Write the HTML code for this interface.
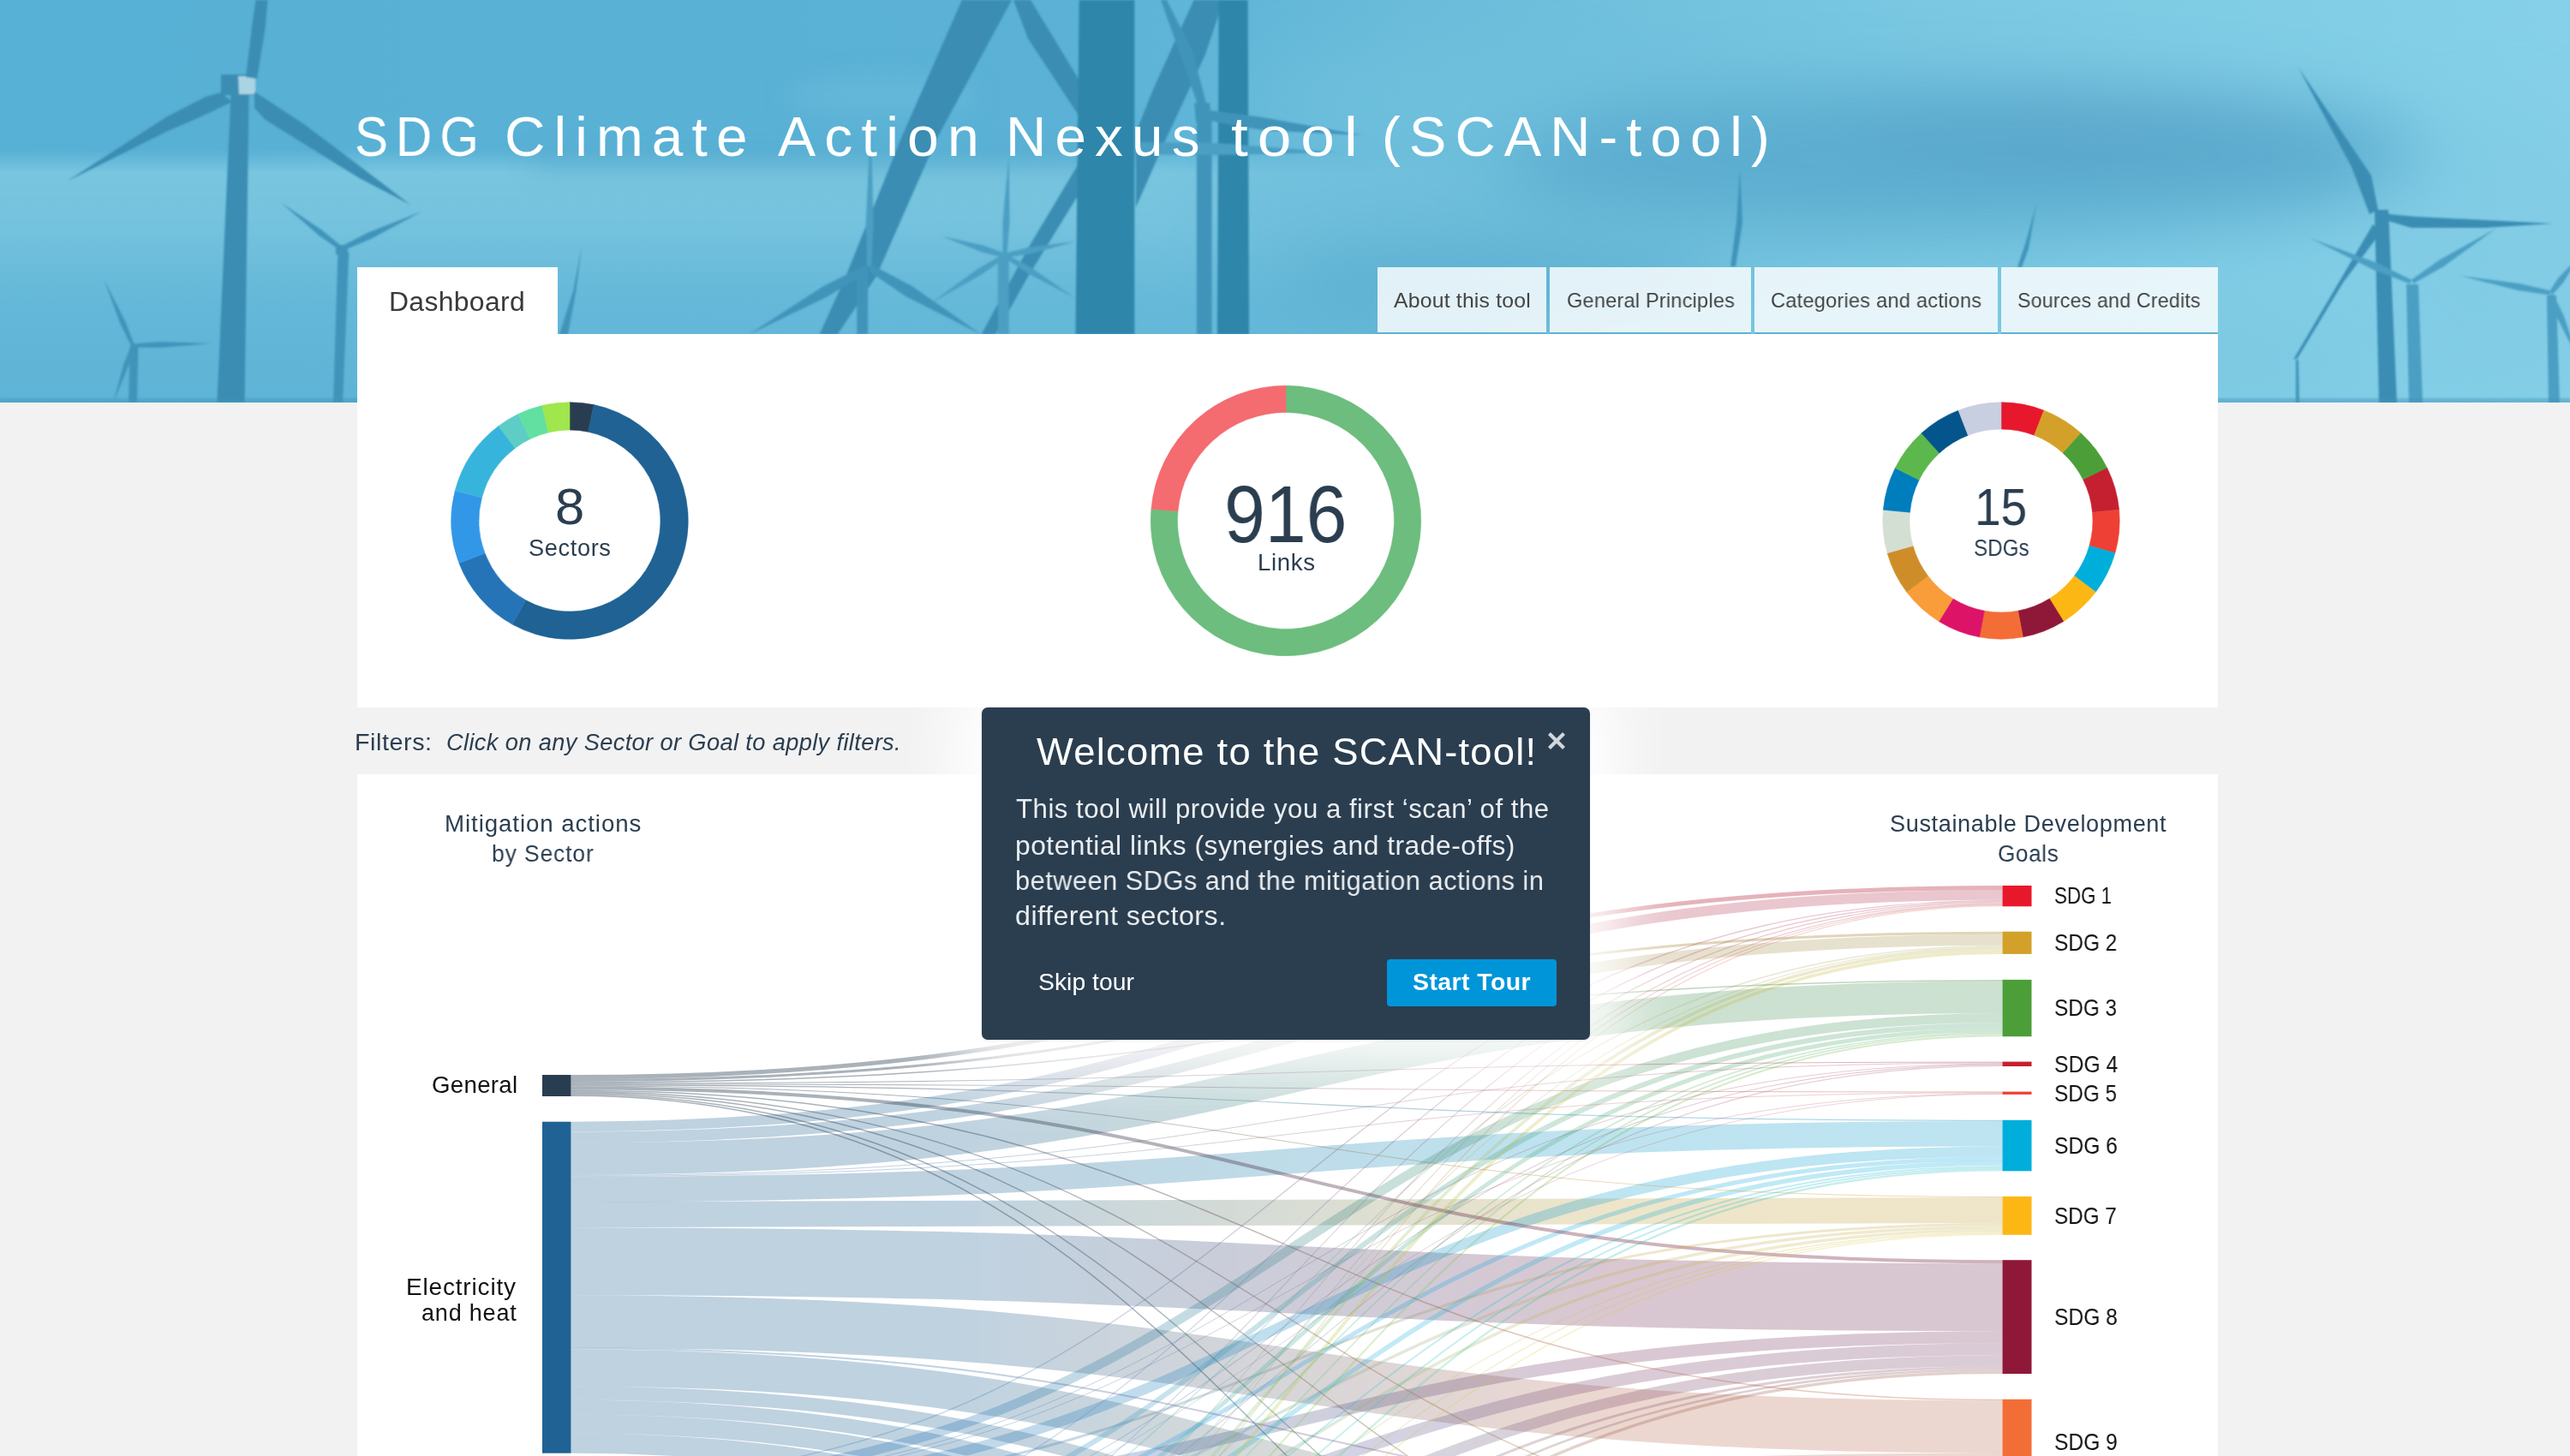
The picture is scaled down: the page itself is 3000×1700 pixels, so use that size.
<!DOCTYPE html>
<html lang="en"><head><meta charset="utf-8"><title>SDG Climate Action Nexus tool (SCAN-tool)</title>
<style>
html,body{margin:0;padding:0}
body{width:3000px;height:1700px;overflow:hidden;background:#f2f2f2;font-family:"Liberation Sans", sans-serif;position:relative}
.t{position:absolute;white-space:nowrap;margin:0;will-change:transform}
.hdr{position:absolute;left:0;top:0}
.box{position:absolute}
.tab{position:absolute;top:312px;height:76px;background:rgba(255,255,255,0.82);border-bottom:2px solid #5fb0d0}
svg{display:block}
</style></head><body><svg class="hdr" width="3000" height="470" viewBox="0 0 3000 470"><defs>
<linearGradient id="sky" x1="0" y1="0" x2="1" y2="0">
<stop offset="0" stop-color="#57b0d5"/><stop offset="0.42" stop-color="#5bb2d6"/><stop offset="0.55" stop-color="#6abcda"/><stop offset="0.75" stop-color="#7ac8e2"/><stop offset="1" stop-color="#86d1e9"/>
</linearGradient>
<linearGradient id="band" x1="0" y1="0" x2="0" y2="1">
<stop offset="0" stop-color="#78c5df" stop-opacity="0"/><stop offset="0.37" stop-color="#78c5df" stop-opacity="0"/>
<stop offset="0.43" stop-color="#79c5df" stop-opacity="1"/><stop offset="0.56" stop-color="#76c3de" stop-opacity="0.95"/>
<stop offset="0.75" stop-color="#68bad9" stop-opacity="0.8"/><stop offset="1" stop-color="#60b5d6" stop-opacity="0.8"/>
</linearGradient>
<linearGradient id="fadeR" x1="0" y1="0" x2="1" y2="0">
<stop offset="0" stop-color="#fff"/><stop offset="0.45" stop-color="#fff"/><stop offset="0.62" stop-color="#000"/><stop offset="1" stop-color="#000"/>
</linearGradient>
<mask id="mL"><rect width="3000" height="470" fill="url(#fadeR)"/></mask>
<filter id="b40" x="-20%" y="-80%" width="140%" height="260%"><feGaussianBlur stdDeviation="38"/></filter>
<filter id="b12" x="-20%" y="-80%" width="140%" height="260%"><feGaussianBlur stdDeviation="14"/></filter>
<filter id="b1"><feGaussianBlur stdDeviation="0.8"/></filter>
</defs><rect width="3000" height="470" fill="url(#sky)"/><rect width="3000" height="470" fill="url(#band)" mask="url(#mL)"/><g filter="url(#b12)"><rect x="620" y="184" width="700" height="12" fill="#52a6cb" opacity="0.8"/><ellipse cx="1030" cy="112" rx="110" ry="22" fill="#6cbddb" opacity="0.6"/></g><g filter="url(#b40)"><ellipse cx="2300" cy="185" rx="560" ry="85" fill="#58a9cd" opacity="0.85"/><ellipse cx="2450" cy="150" rx="280" ry="45" fill="#559fc5" opacity="0.35"/><ellipse cx="1750" cy="330" rx="260" ry="45" fill="#59abce" opacity="0.7"/><ellipse cx="2250" cy="420" rx="520" ry="55" fill="#7cc8e1" opacity="0.8"/><ellipse cx="2920" cy="300" rx="170" ry="170" fill="#80cbe4" opacity="0.7"/><ellipse cx="1650" cy="120" rx="200" ry="70" fill="#72c2de" opacity="0.6"/></g><g filter="url(#b1)"><polygon points="269.5,110 290.5,110 285.6,470 253.4,470" fill="#3a8db3"/><polygon points="258,87 299,87 299,111 258,111" fill="#3a8db3"/><polygon points="278,89 298.5,89 298.5,110 279,110" fill="#a9d4e3"/><polygon points="287,90 294,32 298.5,0 312.4,0 309.8,32 300,92" fill="#3a8db3"/><polygon points="258,108 240,113 193.6,137 78.4,211.4 193.6,154 235,136 271,119" fill="#3a8db3"/><polygon points="297,107 355,145 419.6,193.7 478.6,238.8 419.6,208 355,168 310,140 297,126" fill="#3a8db3"/><polygon points="394.4,295 407.3,295 400,470 389,470" fill="#4194ba"/><polygon points="400.1,288.5 376.1,268.9 328.2,236.6 371.8,274.4 397.1,292.5" fill="#4194ba"/><polygon points="399.7,292.8 433.0,278.9 492.2,247.0 429.7,271.6 397.5,288.2" fill="#4194ba"/><polygon points="392,286 406,286 406,297 392,297" fill="#4194ba"/><polygon points="151.7,404 161.4,404 160,470 150,470" fill="#4194ba"/><polygon points="156.8,402.6 146.4,375.6 122.0,327.6 140.5,378.2 153.2,404.2" fill="#4194ba"/><polygon points="155.1,405.4 187.3,406.1 247.0,401.0 187.1,399.1 154.9,401.4" fill="#4194ba"/><polygon points="153.1,402.8 144.2,425.7 132.3,470.0 149.9,427.7 156.9,404.0" fill="#4194ba"/><polygon points="679,287 669.4,339 653,390.5 663,390.5 672.5,339" fill="#4194ba"/><polygon points="1122.9,0 1181,0 1093.8,161.4 1022.8,322.8 977.6,390.6 956.6,390.6 987.3,322.8 1051.9,161.4" fill="#3a8db3"/><polygon points="1183,0 1203,0 1259.7,93.6 1259.7,135.6 1200,45" fill="#3a8db3"/><polygon points="1259.7,190 1259.7,226 1200,323 1162,390.6 1145.5,390.6 1200,290" fill="#3a8db3"/><polygon points="1393.7,0 1424,0 1424,13 1406.6,64.6 1361.4,161.4 1325.9,242 1325.9,155 1345.2,106.5 1374.3,42" fill="#3a8db3"/><polygon points="1355,0 1362,0 1392,60 1409,124 1400,128 1380,70" fill="#4194ba"/><polygon points="1259.7,0 1324.3,0 1324.3,390.6 1255.5,390.6" fill="#2e86ab"/><polygon points="1422.7,0 1456.6,0 1458,390.6 1421,390.6" fill="#2e86ab"/><polygon points="1396.9,139 1414.6,139 1414.6,390.6 1396.9,390.6" fill="#4194ba"/><polygon points="1394,120 1412,120 1414,140 1396,142" fill="#4194ba"/><polygon points="1413,129 1474,137 1590.5,158 1474,152 1413,141" fill="#4194ba"/><polygon points="1329,166 1420,167 1561,178 1420,181 1329,180" fill="#4c9fc3"/><polygon points="1164.8,300 1177.7,300 1177.7,390.6 1164.8,390.6" fill="#4c9fc3"/><polygon points="1175.4,298.6 1178.6,258.0 1177.7,182.4 1170.6,257.7 1170.4,298.4" fill="#4c9fc3"/><polygon points="1173.6,296.1 1148.7,286.8 1100.3,276.0 1146.3,294.4 1172.2,300.9" fill="#4c9fc3"/><polygon points="1173.4,301.0 1202.4,296.6 1255.0,282.0 1200.8,288.8 1172.4,296.0" fill="#4c9fc3"/><polygon points="1171.5,296.4 1140.8,314.3 1087.4,353.4 1145.1,321.1 1174.3,300.6" fill="#4c9fc3"/><polygon points="1171.6,300.6 1199.6,319.3 1255.0,348.0 1203.7,312.4 1174.2,296.4" fill="#4c9fc3"/><polygon points="1000.2,318 1013.1,318 1013.1,390.6 1000.2,390.6" fill="#4194ba"/><polygon points="1017.2,311.5 1019.7,260.7 1016.4,142.0 1010.7,260.6 1012.2,311.5" fill="#4c9fc3"/><polygon points="1010.0,309.5 960.6,334.5 874.3,390.6 967.0,345.8 1014.0,316.5" fill="#4194ba"/><polygon points="1013.9,316.4 1057.7,346.2 1145.5,390.6 1064.9,334.2 1018.1,309.6" fill="#4194ba"/><polygon points="2031,198 2034,260 2026,311 2020,311 2027,260" fill="#4194ba"/><polygon points="2377,239 2368,290 2360,312 2355,312 2364,285" fill="#4194ba"/><polygon points="2772,245 2788,245 2798,471 2777,471" fill="#3a8db3"/><polygon points="2683,79 2768,205 2776,245 2766,250 2745,195" fill="#3a8db3"/><polygon points="2788,250 2820,253 2980,261 2900,266 2815,266 2788,258" fill="#3a8db3"/><polygon points="2770,262 2677,420 2682,418 2735,330 2780,270" fill="#3a8db3"/><polygon points="2809,332 2823,332 2828,471 2812,471" fill="#4c9fc3"/><polygon points="2817.3,331.1 2852.7,310.9 2914.0,266.5 2847.9,303.3 2814.7,326.9" fill="#4c9fc3"/><polygon points="2815.0,326.7 2774.7,307.0 2696.5,278.0 2771.1,315.3 2813.0,331.3" fill="#4c9fc3"/><polygon points="2973,345 2984,345 2988,471 2975,471" fill="#4c9fc3"/><polygon points="2977.5,339.5 2940.9,331.1 2871.6,322.0 2939.4,338.9 2976.5,344.5" fill="#4c9fc3"/><polygon points="2980.0,343.5 2992.4,329.7 3010.0,300.0 2986.0,324.9 2976.0,340.5" fill="#4c9fc3"/><polygon points="2975.7,345.0 2985.5,372.2 3010.0,420.0 2992.9,369.0 2980.3,343.0" fill="#4c9fc3"/><polygon points="2680,420 2683,420 2684,471 2680,471" fill="#4194ba"/><rect x="0" y="465" width="3000" height="6" fill="#3f95bb" opacity="0.45"/></g></svg><div class="t" style="left:414.0px;top:127.0px;font-size:65px;line-height:65px;color:#ffffff;letter-spacing:10px;font-weight:normal;font-style:normal;transform:scaleX(0.9007);transform-origin:0 0;">SDG</div><div class="t" style="left:589.1px;top:127.0px;font-size:65px;line-height:65px;color:#ffffff;letter-spacing:10px;font-weight:normal;font-style:normal;transform:scaleX(1.0111);transform-origin:0 0;">Climate</div><div class="t" style="left:907.6px;top:127.0px;font-size:65px;line-height:65px;color:#ffffff;letter-spacing:10px;font-weight:normal;font-style:normal;transform:scaleX(1.0181);transform-origin:0 0;">Action</div><div class="t" style="left:1173.7px;top:127.0px;font-size:65px;line-height:65px;color:#ffffff;letter-spacing:10px;font-weight:normal;font-style:normal;transform:scaleX(1.0099);transform-origin:0 0;">Nexus</div><div class="t" style="left:1436.9px;top:127.0px;font-size:65px;line-height:65px;color:#ffffff;letter-spacing:10px;font-weight:normal;font-style:normal;transform:scaleX(1.0965);transform-origin:0 0;">tool</div><div class="t" style="left:1612.7px;top:127.0px;font-size:65px;line-height:65px;color:#ffffff;letter-spacing:10px;font-weight:normal;font-style:normal;transform:scaleX(1.0052);transform-origin:0 0;">(SCAN-tool)</div><div class="box" style="left:417px;top:312px;width:234px;height:90px;background:#fff"></div><div class="t" style="left:453.8px;top:337.4px;font-size:31px;line-height:31px;color:#3a3a3a;letter-spacing:0.3px;font-weight:normal;font-style:normal;transform:scaleX(1.0297);transform-origin:0 0;">Dashboard</div><div class="tab" style="left:1607.5px;width:197.5px"></div><div class="t" style="left:1627.2px;top:339.3px;font-size:24px;line-height:24px;color:#444444;letter-spacing:0.2px;font-weight:normal;font-style:normal;transform:scaleX(1.0313);transform-origin:0 0;">About this tool</div><div class="tab" style="left:1809px;width:235px"></div><div class="t" style="left:1828.6px;top:339.3px;font-size:24px;line-height:24px;color:#444444;letter-spacing:0.2px;font-weight:normal;font-style:normal;transform:scaleX(0.9818);transform-origin:0 0;">General Principles</div><div class="tab" style="left:2047.5px;width:284.5px"></div><div class="t" style="left:2066.7px;top:339.3px;font-size:24px;line-height:24px;color:#444444;letter-spacing:0.2px;font-weight:normal;font-style:normal;transform:scaleX(0.9851);transform-origin:0 0;">Categories and actions</div><div class="tab" style="left:2336px;width:253px"></div><div class="t" style="left:2355.2px;top:339.3px;font-size:24px;line-height:24px;color:#444444;letter-spacing:0.2px;font-weight:normal;font-style:normal;transform:scaleX(0.9660);transform-origin:0 0;">Sources and Credits</div><div class="box" style="left:417px;top:390px;width:2172px;height:436px;background:#fff"></div><div class="box" style="left:417px;top:904px;width:2172px;height:800px;background:#fff"></div><svg class="box" style="left:0;top:390px;z-index:5" width="3000" height="440" viewBox="0 390 3000 440"><path d="M665.00,469.70A138.3,138.3 0 0 1 693.28,472.62L686.68,504.24A106,106 0 0 0 665.00,502.00Z" fill="#293d51" stroke="#293d51" stroke-width="0.6"/><path d="M693.28,472.62A138.3,138.3 0 1 1 598.16,729.08L613.77,700.80A106,106 0 1 0 686.68,504.24Z" fill="#1f6293" stroke="#1f6293" stroke-width="0.6"/><path d="M598.16,729.08A138.3,138.3 0 0 1 535.89,657.56L566.04,645.99A106,106 0 0 0 613.77,700.80Z" fill="#2574b7" stroke="#2574b7" stroke-width="0.6"/><path d="M535.89,657.56A138.3,138.3 0 0 1 531.23,572.91L562.47,581.10A106,106 0 0 0 566.04,645.99Z" fill="#3397e8" stroke="#3397e8" stroke-width="0.6"/><path d="M531.23,572.91A138.3,138.3 0 0 1 581.96,497.40L601.36,523.23A106,106 0 0 0 562.47,581.10Z" fill="#37b4db" stroke="#37b4db" stroke-width="0.6"/><path d="M581.96,497.40A138.3,138.3 0 0 1 604.81,483.49L618.87,512.57A106,106 0 0 0 601.36,523.23Z" fill="#5dcdc5" stroke="#5dcdc5" stroke-width="0.6"/><path d="M604.81,483.49A138.3,138.3 0 0 1 632.71,473.52L640.25,504.93A106,106 0 0 0 618.87,512.57Z" fill="#62e0a1" stroke="#62e0a1" stroke-width="0.6"/><path d="M632.71,473.52A138.3,138.3 0 0 1 665.00,469.70L665.00,502.00A106,106 0 0 0 640.25,504.93Z" fill="#a0e64d" stroke="#a0e64d" stroke-width="0.6"/><path d="M1501.00,450.30A157.7,157.7 0 1 1 1343.90,594.26L1374.98,596.97A126.5,126.5 0 1 0 1501.00,481.50Z" fill="#6cbd7e" stroke="#6cbd7e" stroke-width="0.6"/><path d="M1343.90,594.26A157.7,157.7 0 0 1 1501.00,450.30L1501.00,481.50A126.5,126.5 0 0 0 1374.98,596.97Z" fill="#f46b70" stroke="#f46b70" stroke-width="0.6"/><path d="M2336.00,469.80A138.2,138.2 0 0 1 2385.92,479.13L2374.65,508.23A107,107 0 0 0 2336.00,501.00Z" fill="#e8182c" stroke="#e8182c" stroke-width="0.6"/><path d="M2385.92,479.13A138.2,138.2 0 0 1 2429.10,505.87L2408.09,528.93A107,107 0 0 0 2374.65,508.23Z" fill="#d3a12a" stroke="#d3a12a" stroke-width="0.6"/><path d="M2429.10,505.87A138.2,138.2 0 0 1 2459.71,546.40L2431.78,560.31A107,107 0 0 0 2408.09,528.93Z" fill="#4c9f38" stroke="#4c9f38" stroke-width="0.6"/><path d="M2459.71,546.40A138.2,138.2 0 0 1 2473.61,595.25L2442.54,598.13A107,107 0 0 0 2431.78,560.31Z" fill="#c52030" stroke="#c52030" stroke-width="0.6"/><path d="M2473.61,595.25A138.2,138.2 0 0 1 2468.92,645.82L2438.92,637.28A107,107 0 0 0 2442.54,598.13Z" fill="#ee4034" stroke="#ee4034" stroke-width="0.6"/><path d="M2468.92,645.82A138.2,138.2 0 0 1 2446.29,691.28L2421.39,672.48A107,107 0 0 0 2438.92,637.28Z" fill="#00aedb" stroke="#00aedb" stroke-width="0.6"/><path d="M2446.29,691.28A138.2,138.2 0 0 1 2408.75,725.50L2392.33,698.97A107,107 0 0 0 2421.39,672.48Z" fill="#fdb715" stroke="#fdb715" stroke-width="0.6"/><path d="M2408.75,725.50A138.2,138.2 0 0 1 2361.39,743.85L2355.66,713.18A107,107 0 0 0 2392.33,698.97Z" fill="#8f1838" stroke="#8f1838" stroke-width="0.6"/><path d="M2361.39,743.85A138.2,138.2 0 0 1 2310.61,743.85L2316.34,713.18A107,107 0 0 0 2355.66,713.18Z" fill="#f36d36" stroke="#f36d36" stroke-width="0.6"/><path d="M2310.61,743.85A138.2,138.2 0 0 1 2263.25,725.50L2279.67,698.97A107,107 0 0 0 2316.34,713.18Z" fill="#dd1368" stroke="#dd1368" stroke-width="0.6"/><path d="M2263.25,725.50A138.2,138.2 0 0 1 2225.71,691.28L2250.61,672.48A107,107 0 0 0 2279.67,698.97Z" fill="#f89d39" stroke="#f89d39" stroke-width="0.6"/><path d="M2225.71,691.28A138.2,138.2 0 0 1 2203.08,645.82L2233.08,637.28A107,107 0 0 0 2250.61,672.48Z" fill="#cf8d2a" stroke="#cf8d2a" stroke-width="0.6"/><path d="M2203.08,645.82A138.2,138.2 0 0 1 2198.39,595.25L2229.46,598.13A107,107 0 0 0 2233.08,637.28Z" fill="#d4dfd4" stroke="#d4dfd4" stroke-width="0.6"/><path d="M2198.39,595.25A138.2,138.2 0 0 1 2212.29,546.40L2240.22,560.31A107,107 0 0 0 2229.46,598.13Z" fill="#007dbd" stroke="#007dbd" stroke-width="0.6"/><path d="M2212.29,546.40A138.2,138.2 0 0 1 2242.90,505.87L2263.91,528.93A107,107 0 0 0 2240.22,560.31Z" fill="#5cb84c" stroke="#5cb84c" stroke-width="0.6"/><path d="M2242.90,505.87A138.2,138.2 0 0 1 2286.08,479.13L2297.35,508.23A107,107 0 0 0 2263.91,528.93Z" fill="#03558b" stroke="#03558b" stroke-width="0.6"/><path d="M2286.08,479.13A138.2,138.2 0 0 1 2336.00,469.80L2336.00,501.00A107,107 0 0 0 2297.35,508.23Z" fill="#c7cfe0" stroke="#c7cfe0" stroke-width="0.6"/></svg><div class="t" style="left:647.9px;top:562.9px;font-size:59px;line-height:59px;color:#2b3e50;letter-spacing:0px;font-weight:normal;font-style:normal;transform:scaleX(1.0450);transform-origin:0 0;">8</div><div class="t" style="left:616.6px;top:626.6px;font-size:27px;line-height:27px;color:#2b3e50;letter-spacing:0.6px;font-weight:normal;font-style:normal;transform:scaleX(1.0081);transform-origin:0 0;">Sectors</div><div class="t" style="left:1429.3px;top:553.8px;font-size:94px;line-height:94px;color:#2b3e50;letter-spacing:0px;font-weight:normal;font-style:normal;transform:scaleX(0.9145);transform-origin:0 0;">916</div><div class="t" style="left:1467.7px;top:644.3px;font-size:27px;line-height:27px;color:#2b3e50;letter-spacing:0.6px;font-weight:normal;font-style:normal;transform:scaleX(1.0233);transform-origin:0 0;">Links</div><div class="t" style="left:2305.3px;top:562.3px;font-size:61px;line-height:61px;color:#2b3e50;letter-spacing:0px;font-weight:normal;font-style:normal;transform:scaleX(0.9000);transform-origin:0 0;">15</div><div class="t" style="left:2304.3px;top:626.8px;font-size:27px;line-height:27px;color:#2b3e50;letter-spacing:0px;font-weight:normal;font-style:normal;transform:scaleX(0.8975);transform-origin:0 0;">SDGs</div><div class="t" style="left:414.1px;top:854.1px;font-size:27px;line-height:27px;color:#2b3e50;letter-spacing:0.5px;font-weight:normal;font-style:normal;transform:scaleX(1.0658);transform-origin:0 0;">Filters:</div><div class="t" style="left:521.1px;top:854.1px;font-size:27px;line-height:27px;color:#2b3e50;letter-spacing:0.35px;font-weight:normal;font-style:italic;transform:scaleX(1.0096);transform-origin:0 0;">Click on any Sector or Goal to apply filters.</div><div class="t" style="left:518.5px;top:948.7px;font-size:27px;line-height:27px;color:#2b3e50;letter-spacing:0.9px;font-weight:normal;font-style:normal;transform:scaleX(1.0243);transform-origin:0 0;">Mitigation actions</div><div class="t" style="left:573.8px;top:984.4px;font-size:27px;line-height:27px;color:#2b3e50;letter-spacing:0.9px;font-weight:normal;font-style:normal;transform:scaleX(0.9794);transform-origin:0 0;">by Sector</div><div class="t" style="left:2206.0px;top:948.9px;font-size:27px;line-height:27px;color:#2b3e50;letter-spacing:0.6px;font-weight:normal;font-style:normal;transform:scaleX(1.0052);transform-origin:0 0;">Sustainable Development</div><div class="t" style="left:2332.3px;top:983.9px;font-size:27px;line-height:27px;color:#2b3e50;letter-spacing:0.6px;font-weight:normal;font-style:normal;transform:scaleX(0.9696);transform-origin:0 0;">Goals</div><svg class="box" style="left:0;top:904px" width="3000" height="796" viewBox="0 904 3000 796"><defs><linearGradient id="g0_0" gradientUnits="userSpaceOnUse" x1="666.5" y1="0" x2="2337.5" y2="0"><stop offset="0.27" stop-color="#293d51" stop-opacity="0.399"/><stop offset="0.73" stop-color="#b42236" stop-opacity="0.345"/></linearGradient><linearGradient id="g0_1" gradientUnits="userSpaceOnUse" x1="666.5" y1="0" x2="2337.5" y2="0"><stop offset="0.27" stop-color="#293d51" stop-opacity="0.399"/><stop offset="0.73" stop-color="#a58635" stop-opacity="0.345"/></linearGradient><linearGradient id="g0_2" gradientUnits="userSpaceOnUse" x1="666.5" y1="0" x2="2337.5" y2="0"><stop offset="0.27" stop-color="#293d51" stop-opacity="0.399"/><stop offset="0.73" stop-color="#43853f" stop-opacity="0.345"/></linearGradient><linearGradient id="g0_3" gradientUnits="userSpaceOnUse" x1="666.5" y1="0" x2="2337.5" y2="0"><stop offset="0.27" stop-color="#293d51" stop-opacity="0.399"/><stop offset="0.73" stop-color="#9b2839" stop-opacity="0.345"/></linearGradient><linearGradient id="g0_4" gradientUnits="userSpaceOnUse" x1="666.5" y1="0" x2="2337.5" y2="0"><stop offset="0.27" stop-color="#293d51" stop-opacity="0.399"/><stop offset="0.73" stop-color="#b93f3c" stop-opacity="0.345"/></linearGradient><linearGradient id="g0_5" gradientUnits="userSpaceOnUse" x1="666.5" y1="0" x2="2337.5" y2="0"><stop offset="0.27" stop-color="#293d51" stop-opacity="0.399"/><stop offset="0.73" stop-color="#0b8fb6" stop-opacity="0.345"/></linearGradient><linearGradient id="g0_6" gradientUnits="userSpaceOnUse" x1="666.5" y1="0" x2="2337.5" y2="0"><stop offset="0.27" stop-color="#293d51" stop-opacity="0.399"/><stop offset="0.73" stop-color="#c49625" stop-opacity="0.345"/></linearGradient><linearGradient id="g0_7" gradientUnits="userSpaceOnUse" x1="666.5" y1="0" x2="2337.5" y2="0"><stop offset="0.27" stop-color="#293d51" stop-opacity="0.399"/><stop offset="0.73" stop-color="#73223f" stop-opacity="0.345"/></linearGradient><linearGradient id="g0_8" gradientUnits="userSpaceOnUse" x1="666.5" y1="0" x2="2337.5" y2="0"><stop offset="0.27" stop-color="#293d51" stop-opacity="0.399"/><stop offset="0.73" stop-color="#bc603d" stop-opacity="0.345"/></linearGradient><linearGradient id="g0_10" gradientUnits="userSpaceOnUse" x1="666.5" y1="0" x2="2337.5" y2="0"><stop offset="0.27" stop-color="#293d51" stop-opacity="0.399"/><stop offset="0.73" stop-color="#c0833f" stop-opacity="0.345"/></linearGradient><linearGradient id="g0_11" gradientUnits="userSpaceOnUse" x1="666.5" y1="0" x2="2337.5" y2="0"><stop offset="0.27" stop-color="#293d51" stop-opacity="0.399"/><stop offset="0.73" stop-color="#a27735" stop-opacity="0.345"/></linearGradient><linearGradient id="g0_13" gradientUnits="userSpaceOnUse" x1="666.5" y1="0" x2="2337.5" y2="0"><stop offset="0.27" stop-color="#293d51" stop-opacity="0.399"/><stop offset="0.73" stop-color="#4e974d" stop-opacity="0.345"/></linearGradient><linearGradient id="g0_14" gradientUnits="userSpaceOnUse" x1="666.5" y1="0" x2="2337.5" y2="0"><stop offset="0.27" stop-color="#293d51" stop-opacity="0.399"/><stop offset="0.73" stop-color="#0d4f7b" stop-opacity="0.345"/></linearGradient><linearGradient id="g1_0" gradientUnits="userSpaceOnUse" x1="666.5" y1="0" x2="2337.5" y2="0"><stop offset="0.27" stop-color="#1f6293" stop-opacity="0.285"/><stop offset="0.73" stop-color="#b22c48" stop-opacity="0.265"/></linearGradient><linearGradient id="g1_1" gradientUnits="userSpaceOnUse" x1="666.5" y1="0" x2="2337.5" y2="0"><stop offset="0.27" stop-color="#1f6293" stop-opacity="0.285"/><stop offset="0.73" stop-color="#a29046" stop-opacity="0.265"/></linearGradient><linearGradient id="g1_2" gradientUnits="userSpaceOnUse" x1="666.5" y1="0" x2="2337.5" y2="0"><stop offset="0.27" stop-color="#1f6293" stop-opacity="0.285"/><stop offset="0.73" stop-color="#408f51" stop-opacity="0.265"/></linearGradient><linearGradient id="g1_3" gradientUnits="userSpaceOnUse" x1="666.5" y1="0" x2="2337.5" y2="0"><stop offset="0.27" stop-color="#1f6293" stop-opacity="0.285"/><stop offset="0.73" stop-color="#98324b" stop-opacity="0.265"/></linearGradient><linearGradient id="g1_4" gradientUnits="userSpaceOnUse" x1="666.5" y1="0" x2="2337.5" y2="0"><stop offset="0.27" stop-color="#1f6293" stop-opacity="0.285"/><stop offset="0.73" stop-color="#b6494e" stop-opacity="0.265"/></linearGradient><linearGradient id="g1_5" gradientUnits="userSpaceOnUse" x1="666.5" y1="0" x2="2337.5" y2="0"><stop offset="0.27" stop-color="#1f6293" stop-opacity="0.285"/><stop offset="0.73" stop-color="#0899c8" stop-opacity="0.265"/></linearGradient><linearGradient id="g1_6" gradientUnits="userSpaceOnUse" x1="666.5" y1="0" x2="2337.5" y2="0"><stop offset="0.27" stop-color="#1f6293" stop-opacity="0.285"/><stop offset="0.73" stop-color="#c1a037" stop-opacity="0.265"/></linearGradient><linearGradient id="g1_7" gradientUnits="userSpaceOnUse" x1="666.5" y1="0" x2="2337.5" y2="0"><stop offset="0.27" stop-color="#1f6293" stop-opacity="0.285"/><stop offset="0.73" stop-color="#712c51" stop-opacity="0.265"/></linearGradient><linearGradient id="g1_8" gradientUnits="userSpaceOnUse" x1="666.5" y1="0" x2="2337.5" y2="0"><stop offset="0.27" stop-color="#1f6293" stop-opacity="0.285"/><stop offset="0.73" stop-color="#ba6a4f" stop-opacity="0.265"/></linearGradient><linearGradient id="g1_9" gradientUnits="userSpaceOnUse" x1="666.5" y1="0" x2="2337.5" y2="0"><stop offset="0.27" stop-color="#1f6293" stop-opacity="0.285"/><stop offset="0.73" stop-color="#aa2874" stop-opacity="0.265"/></linearGradient><linearGradient id="g1_10" gradientUnits="userSpaceOnUse" x1="666.5" y1="0" x2="2337.5" y2="0"><stop offset="0.27" stop-color="#1f6293" stop-opacity="0.285"/><stop offset="0.73" stop-color="#bd8d51" stop-opacity="0.265"/></linearGradient><linearGradient id="g1_11" gradientUnits="userSpaceOnUse" x1="666.5" y1="0" x2="2337.5" y2="0"><stop offset="0.27" stop-color="#1f6293" stop-opacity="0.285"/><stop offset="0.73" stop-color="#9f8146" stop-opacity="0.265"/></linearGradient><linearGradient id="g1_12" gradientUnits="userSpaceOnUse" x1="666.5" y1="0" x2="2337.5" y2="0"><stop offset="0.27" stop-color="#1f6293" stop-opacity="0.285"/><stop offset="0.73" stop-color="#0876b2" stop-opacity="0.265"/></linearGradient><linearGradient id="g1_13" gradientUnits="userSpaceOnUse" x1="666.5" y1="0" x2="2337.5" y2="0"><stop offset="0.27" stop-color="#1f6293" stop-opacity="0.285"/><stop offset="0.73" stop-color="#4ca15f" stop-opacity="0.265"/></linearGradient><linearGradient id="g1_14" gradientUnits="userSpaceOnUse" x1="666.5" y1="0" x2="2337.5" y2="0"><stop offset="0.27" stop-color="#1f6293" stop-opacity="0.285"/><stop offset="0.73" stop-color="#0b598d" stop-opacity="0.265"/></linearGradient><linearGradient id="g2_0" gradientUnits="userSpaceOnUse" x1="666.5" y1="0" x2="2337.5" y2="0"><stop offset="0.27" stop-color="#2574b7" stop-opacity="0.285"/><stop offset="0.73" stop-color="#b33152" stop-opacity="0.265"/></linearGradient><linearGradient id="g2_2" gradientUnits="userSpaceOnUse" x1="666.5" y1="0" x2="2337.5" y2="0"><stop offset="0.27" stop-color="#2574b7" stop-opacity="0.285"/><stop offset="0.73" stop-color="#41935a" stop-opacity="0.265"/></linearGradient><linearGradient id="g2_3" gradientUnits="userSpaceOnUse" x1="666.5" y1="0" x2="2337.5" y2="0"><stop offset="0.27" stop-color="#2574b7" stop-opacity="0.285"/><stop offset="0.73" stop-color="#9a3754" stop-opacity="0.265"/></linearGradient><linearGradient id="g2_4" gradientUnits="userSpaceOnUse" x1="666.5" y1="0" x2="2337.5" y2="0"><stop offset="0.27" stop-color="#2574b7" stop-opacity="0.285"/><stop offset="0.73" stop-color="#b84e57" stop-opacity="0.265"/></linearGradient><linearGradient id="g2_5" gradientUnits="userSpaceOnUse" x1="666.5" y1="0" x2="2337.5" y2="0"><stop offset="0.27" stop-color="#2574b7" stop-opacity="0.285"/><stop offset="0.73" stop-color="#0a9ed1" stop-opacity="0.265"/></linearGradient><linearGradient id="g2_6" gradientUnits="userSpaceOnUse" x1="666.5" y1="0" x2="2337.5" y2="0"><stop offset="0.27" stop-color="#2574b7" stop-opacity="0.285"/><stop offset="0.73" stop-color="#c3a541" stop-opacity="0.265"/></linearGradient><linearGradient id="g2_7" gradientUnits="userSpaceOnUse" x1="666.5" y1="0" x2="2337.5" y2="0"><stop offset="0.27" stop-color="#2574b7" stop-opacity="0.285"/><stop offset="0.73" stop-color="#72315a" stop-opacity="0.265"/></linearGradient><linearGradient id="g2_8" gradientUnits="userSpaceOnUse" x1="666.5" y1="0" x2="2337.5" y2="0"><stop offset="0.27" stop-color="#2574b7" stop-opacity="0.285"/><stop offset="0.73" stop-color="#bb6f59" stop-opacity="0.265"/></linearGradient><linearGradient id="g2_9" gradientUnits="userSpaceOnUse" x1="666.5" y1="0" x2="2337.5" y2="0"><stop offset="0.27" stop-color="#2574b7" stop-opacity="0.285"/><stop offset="0.73" stop-color="#ab2d7d" stop-opacity="0.265"/></linearGradient><linearGradient id="g2_10" gradientUnits="userSpaceOnUse" x1="666.5" y1="0" x2="2337.5" y2="0"><stop offset="0.27" stop-color="#2574b7" stop-opacity="0.285"/><stop offset="0.73" stop-color="#bf925b" stop-opacity="0.265"/></linearGradient><linearGradient id="g2_11" gradientUnits="userSpaceOnUse" x1="666.5" y1="0" x2="2337.5" y2="0"><stop offset="0.27" stop-color="#2574b7" stop-opacity="0.285"/><stop offset="0.73" stop-color="#a18650" stop-opacity="0.265"/></linearGradient><linearGradient id="g2_12" gradientUnits="userSpaceOnUse" x1="666.5" y1="0" x2="2337.5" y2="0"><stop offset="0.27" stop-color="#2574b7" stop-opacity="0.285"/><stop offset="0.73" stop-color="#0a7bbb" stop-opacity="0.265"/></linearGradient><linearGradient id="g2_13" gradientUnits="userSpaceOnUse" x1="666.5" y1="0" x2="2337.5" y2="0"><stop offset="0.27" stop-color="#2574b7" stop-opacity="0.285"/><stop offset="0.73" stop-color="#4da669" stop-opacity="0.265"/></linearGradient><linearGradient id="g2_14" gradientUnits="userSpaceOnUse" x1="666.5" y1="0" x2="2337.5" y2="0"><stop offset="0.27" stop-color="#2574b7" stop-opacity="0.285"/><stop offset="0.73" stop-color="#0c5d97" stop-opacity="0.265"/></linearGradient><linearGradient id="g3_0" gradientUnits="userSpaceOnUse" x1="666.5" y1="0" x2="2337.5" y2="0"><stop offset="0.27" stop-color="#3397e8" stop-opacity="0.285"/><stop offset="0.73" stop-color="#b73a5f" stop-opacity="0.265"/></linearGradient><linearGradient id="g3_2" gradientUnits="userSpaceOnUse" x1="666.5" y1="0" x2="2337.5" y2="0"><stop offset="0.27" stop-color="#3397e8" stop-opacity="0.285"/><stop offset="0.73" stop-color="#459d68" stop-opacity="0.265"/></linearGradient><linearGradient id="g3_3" gradientUnits="userSpaceOnUse" x1="666.5" y1="0" x2="2337.5" y2="0"><stop offset="0.27" stop-color="#3397e8" stop-opacity="0.285"/><stop offset="0.73" stop-color="#9e4062" stop-opacity="0.265"/></linearGradient><linearGradient id="g3_4" gradientUnits="userSpaceOnUse" x1="666.5" y1="0" x2="2337.5" y2="0"><stop offset="0.27" stop-color="#3397e8" stop-opacity="0.285"/><stop offset="0.73" stop-color="#bc5765" stop-opacity="0.265"/></linearGradient><linearGradient id="g3_5" gradientUnits="userSpaceOnUse" x1="666.5" y1="0" x2="2337.5" y2="0"><stop offset="0.27" stop-color="#3397e8" stop-opacity="0.285"/><stop offset="0.73" stop-color="#0ea8df" stop-opacity="0.265"/></linearGradient><linearGradient id="g3_6" gradientUnits="userSpaceOnUse" x1="666.5" y1="0" x2="2337.5" y2="0"><stop offset="0.27" stop-color="#3397e8" stop-opacity="0.285"/><stop offset="0.73" stop-color="#c6ae4e" stop-opacity="0.265"/></linearGradient><linearGradient id="g3_7" gradientUnits="userSpaceOnUse" x1="666.5" y1="0" x2="2337.5" y2="0"><stop offset="0.27" stop-color="#3397e8" stop-opacity="0.285"/><stop offset="0.73" stop-color="#763a68" stop-opacity="0.265"/></linearGradient><linearGradient id="g3_8" gradientUnits="userSpaceOnUse" x1="666.5" y1="0" x2="2337.5" y2="0"><stop offset="0.27" stop-color="#3397e8" stop-opacity="0.285"/><stop offset="0.73" stop-color="#bf7866" stop-opacity="0.265"/></linearGradient><linearGradient id="g3_9" gradientUnits="userSpaceOnUse" x1="666.5" y1="0" x2="2337.5" y2="0"><stop offset="0.27" stop-color="#3397e8" stop-opacity="0.285"/><stop offset="0.73" stop-color="#af378b" stop-opacity="0.265"/></linearGradient><linearGradient id="g3_10" gradientUnits="userSpaceOnUse" x1="666.5" y1="0" x2="2337.5" y2="0"><stop offset="0.27" stop-color="#3397e8" stop-opacity="0.285"/><stop offset="0.73" stop-color="#c39b68" stop-opacity="0.265"/></linearGradient><linearGradient id="g3_11" gradientUnits="userSpaceOnUse" x1="666.5" y1="0" x2="2337.5" y2="0"><stop offset="0.27" stop-color="#3397e8" stop-opacity="0.285"/><stop offset="0.73" stop-color="#a5905d" stop-opacity="0.265"/></linearGradient><linearGradient id="g3_14" gradientUnits="userSpaceOnUse" x1="666.5" y1="0" x2="2337.5" y2="0"><stop offset="0.27" stop-color="#3397e8" stop-opacity="0.285"/><stop offset="0.73" stop-color="#1067a4" stop-opacity="0.265"/></linearGradient><linearGradient id="g4_0" gradientUnits="userSpaceOnUse" x1="666.5" y1="0" x2="2337.5" y2="0"><stop offset="0.27" stop-color="#37b4db" stop-opacity="0.285"/><stop offset="0.73" stop-color="#b8425b" stop-opacity="0.265"/></linearGradient><linearGradient id="g4_1" gradientUnits="userSpaceOnUse" x1="666.5" y1="0" x2="2337.5" y2="0"><stop offset="0.27" stop-color="#37b4db" stop-opacity="0.285"/><stop offset="0.73" stop-color="#a9a65a" stop-opacity="0.265"/></linearGradient><linearGradient id="g4_2" gradientUnits="userSpaceOnUse" x1="666.5" y1="0" x2="2337.5" y2="0"><stop offset="0.27" stop-color="#37b4db" stop-opacity="0.285"/><stop offset="0.73" stop-color="#46a564" stop-opacity="0.265"/></linearGradient><linearGradient id="g4_3" gradientUnits="userSpaceOnUse" x1="666.5" y1="0" x2="2337.5" y2="0"><stop offset="0.27" stop-color="#37b4db" stop-opacity="0.285"/><stop offset="0.73" stop-color="#9f485e" stop-opacity="0.265"/></linearGradient><linearGradient id="g4_5" gradientUnits="userSpaceOnUse" x1="666.5" y1="0" x2="2337.5" y2="0"><stop offset="0.27" stop-color="#37b4db" stop-opacity="0.285"/><stop offset="0.73" stop-color="#0fb0db" stop-opacity="0.265"/></linearGradient><linearGradient id="g4_6" gradientUnits="userSpaceOnUse" x1="666.5" y1="0" x2="2337.5" y2="0"><stop offset="0.27" stop-color="#37b4db" stop-opacity="0.285"/><stop offset="0.73" stop-color="#c8b64a" stop-opacity="0.265"/></linearGradient><linearGradient id="g4_7" gradientUnits="userSpaceOnUse" x1="666.5" y1="0" x2="2337.5" y2="0"><stop offset="0.27" stop-color="#37b4db" stop-opacity="0.285"/><stop offset="0.73" stop-color="#774264" stop-opacity="0.265"/></linearGradient><linearGradient id="g4_8" gradientUnits="userSpaceOnUse" x1="666.5" y1="0" x2="2337.5" y2="0"><stop offset="0.27" stop-color="#37b4db" stop-opacity="0.285"/><stop offset="0.73" stop-color="#c08063" stop-opacity="0.265"/></linearGradient><linearGradient id="g4_9" gradientUnits="userSpaceOnUse" x1="666.5" y1="0" x2="2337.5" y2="0"><stop offset="0.27" stop-color="#37b4db" stop-opacity="0.285"/><stop offset="0.73" stop-color="#b03e87" stop-opacity="0.265"/></linearGradient><linearGradient id="g4_10" gradientUnits="userSpaceOnUse" x1="666.5" y1="0" x2="2337.5" y2="0"><stop offset="0.27" stop-color="#37b4db" stop-opacity="0.285"/><stop offset="0.73" stop-color="#c4a365" stop-opacity="0.265"/></linearGradient><linearGradient id="g4_11" gradientUnits="userSpaceOnUse" x1="666.5" y1="0" x2="2337.5" y2="0"><stop offset="0.27" stop-color="#37b4db" stop-opacity="0.285"/><stop offset="0.73" stop-color="#a6985a" stop-opacity="0.265"/></linearGradient><linearGradient id="g4_12" gradientUnits="userSpaceOnUse" x1="666.5" y1="0" x2="2337.5" y2="0"><stop offset="0.27" stop-color="#37b4db" stop-opacity="0.285"/><stop offset="0.73" stop-color="#0f8cc5" stop-opacity="0.265"/></linearGradient><linearGradient id="g4_13" gradientUnits="userSpaceOnUse" x1="666.5" y1="0" x2="2337.5" y2="0"><stop offset="0.27" stop-color="#37b4db" stop-opacity="0.285"/><stop offset="0.73" stop-color="#52b773" stop-opacity="0.265"/></linearGradient><linearGradient id="g4_14" gradientUnits="userSpaceOnUse" x1="666.5" y1="0" x2="2337.5" y2="0"><stop offset="0.27" stop-color="#37b4db" stop-opacity="0.285"/><stop offset="0.73" stop-color="#116fa1" stop-opacity="0.265"/></linearGradient><linearGradient id="g5_0" gradientUnits="userSpaceOnUse" x1="666.5" y1="0" x2="2337.5" y2="0"><stop offset="0.27" stop-color="#5dcdc5" stop-opacity="0.285"/><stop offset="0.73" stop-color="#c24955" stop-opacity="0.265"/></linearGradient><linearGradient id="g5_1" gradientUnits="userSpaceOnUse" x1="666.5" y1="0" x2="2337.5" y2="0"><stop offset="0.27" stop-color="#5dcdc5" stop-opacity="0.285"/><stop offset="0.73" stop-color="#b3ad54" stop-opacity="0.265"/></linearGradient><linearGradient id="g5_2" gradientUnits="userSpaceOnUse" x1="666.5" y1="0" x2="2337.5" y2="0"><stop offset="0.27" stop-color="#5dcdc5" stop-opacity="0.285"/><stop offset="0.73" stop-color="#51ab5e" stop-opacity="0.265"/></linearGradient><linearGradient id="g5_5" gradientUnits="userSpaceOnUse" x1="666.5" y1="0" x2="2337.5" y2="0"><stop offset="0.27" stop-color="#5dcdc5" stop-opacity="0.285"/><stop offset="0.73" stop-color="#19b6d5" stop-opacity="0.265"/></linearGradient><linearGradient id="g5_6" gradientUnits="userSpaceOnUse" x1="666.5" y1="0" x2="2337.5" y2="0"><stop offset="0.27" stop-color="#5dcdc5" stop-opacity="0.285"/><stop offset="0.73" stop-color="#d2bd45" stop-opacity="0.265"/></linearGradient><linearGradient id="g5_7" gradientUnits="userSpaceOnUse" x1="666.5" y1="0" x2="2337.5" y2="0"><stop offset="0.27" stop-color="#5dcdc5" stop-opacity="0.285"/><stop offset="0.73" stop-color="#82495e" stop-opacity="0.265"/></linearGradient><linearGradient id="g5_8" gradientUnits="userSpaceOnUse" x1="666.5" y1="0" x2="2337.5" y2="0"><stop offset="0.27" stop-color="#5dcdc5" stop-opacity="0.285"/><stop offset="0.73" stop-color="#ca875d" stop-opacity="0.265"/></linearGradient><linearGradient id="g5_10" gradientUnits="userSpaceOnUse" x1="666.5" y1="0" x2="2337.5" y2="0"><stop offset="0.27" stop-color="#5dcdc5" stop-opacity="0.285"/><stop offset="0.73" stop-color="#ceaa5f" stop-opacity="0.265"/></linearGradient><linearGradient id="g5_11" gradientUnits="userSpaceOnUse" x1="666.5" y1="0" x2="2337.5" y2="0"><stop offset="0.27" stop-color="#5dcdc5" stop-opacity="0.285"/><stop offset="0.73" stop-color="#b09e54" stop-opacity="0.265"/></linearGradient><linearGradient id="g5_12" gradientUnits="userSpaceOnUse" x1="666.5" y1="0" x2="2337.5" y2="0"><stop offset="0.27" stop-color="#5dcdc5" stop-opacity="0.285"/><stop offset="0.73" stop-color="#1993bf" stop-opacity="0.265"/></linearGradient><linearGradient id="g5_13" gradientUnits="userSpaceOnUse" x1="666.5" y1="0" x2="2337.5" y2="0"><stop offset="0.27" stop-color="#5dcdc5" stop-opacity="0.285"/><stop offset="0.73" stop-color="#5cbe6d" stop-opacity="0.265"/></linearGradient><linearGradient id="g5_14" gradientUnits="userSpaceOnUse" x1="666.5" y1="0" x2="2337.5" y2="0"><stop offset="0.27" stop-color="#5dcdc5" stop-opacity="0.285"/><stop offset="0.73" stop-color="#1b759b" stop-opacity="0.265"/></linearGradient><linearGradient id="g6_0" gradientUnits="userSpaceOnUse" x1="666.5" y1="0" x2="2337.5" y2="0"><stop offset="0.27" stop-color="#62e0a1" stop-opacity="0.285"/><stop offset="0.73" stop-color="#c44e4c" stop-opacity="0.265"/></linearGradient><linearGradient id="g6_1" gradientUnits="userSpaceOnUse" x1="666.5" y1="0" x2="2337.5" y2="0"><stop offset="0.27" stop-color="#62e0a1" stop-opacity="0.285"/><stop offset="0.73" stop-color="#b4b24a" stop-opacity="0.265"/></linearGradient><linearGradient id="g6_2" gradientUnits="userSpaceOnUse" x1="666.5" y1="0" x2="2337.5" y2="0"><stop offset="0.27" stop-color="#62e0a1" stop-opacity="0.285"/><stop offset="0.73" stop-color="#52b154" stop-opacity="0.265"/></linearGradient><linearGradient id="g6_5" gradientUnits="userSpaceOnUse" x1="666.5" y1="0" x2="2337.5" y2="0"><stop offset="0.27" stop-color="#62e0a1" stop-opacity="0.285"/><stop offset="0.73" stop-color="#1abccb" stop-opacity="0.265"/></linearGradient><linearGradient id="g6_6" gradientUnits="userSpaceOnUse" x1="666.5" y1="0" x2="2337.5" y2="0"><stop offset="0.27" stop-color="#62e0a1" stop-opacity="0.285"/><stop offset="0.73" stop-color="#d3c23b" stop-opacity="0.265"/></linearGradient><linearGradient id="g6_7" gradientUnits="userSpaceOnUse" x1="666.5" y1="0" x2="2337.5" y2="0"><stop offset="0.27" stop-color="#62e0a1" stop-opacity="0.285"/><stop offset="0.73" stop-color="#834e54" stop-opacity="0.265"/></linearGradient><linearGradient id="g6_8" gradientUnits="userSpaceOnUse" x1="666.5" y1="0" x2="2337.5" y2="0"><stop offset="0.27" stop-color="#62e0a1" stop-opacity="0.285"/><stop offset="0.73" stop-color="#cc8c53" stop-opacity="0.265"/></linearGradient><linearGradient id="g6_11" gradientUnits="userSpaceOnUse" x1="666.5" y1="0" x2="2337.5" y2="0"><stop offset="0.27" stop-color="#62e0a1" stop-opacity="0.285"/><stop offset="0.73" stop-color="#b2a34a" stop-opacity="0.265"/></linearGradient><linearGradient id="g6_12" gradientUnits="userSpaceOnUse" x1="666.5" y1="0" x2="2337.5" y2="0"><stop offset="0.27" stop-color="#62e0a1" stop-opacity="0.285"/><stop offset="0.73" stop-color="#1a98b5" stop-opacity="0.265"/></linearGradient><linearGradient id="g6_13" gradientUnits="userSpaceOnUse" x1="666.5" y1="0" x2="2337.5" y2="0"><stop offset="0.27" stop-color="#62e0a1" stop-opacity="0.285"/><stop offset="0.73" stop-color="#5ec363" stop-opacity="0.265"/></linearGradient><linearGradient id="g6_14" gradientUnits="userSpaceOnUse" x1="666.5" y1="0" x2="2337.5" y2="0"><stop offset="0.27" stop-color="#62e0a1" stop-opacity="0.285"/><stop offset="0.73" stop-color="#1d7b91" stop-opacity="0.265"/></linearGradient><linearGradient id="g7_0" gradientUnits="userSpaceOnUse" x1="666.5" y1="0" x2="2337.5" y2="0"><stop offset="0.27" stop-color="#a0e64d" stop-opacity="0.285"/><stop offset="0.73" stop-color="#d55035" stop-opacity="0.265"/></linearGradient><linearGradient id="g7_1" gradientUnits="userSpaceOnUse" x1="666.5" y1="0" x2="2337.5" y2="0"><stop offset="0.27" stop-color="#a0e64d" stop-opacity="0.285"/><stop offset="0.73" stop-color="#c5b433" stop-opacity="0.265"/></linearGradient><linearGradient id="g7_2" gradientUnits="userSpaceOnUse" x1="666.5" y1="0" x2="2337.5" y2="0"><stop offset="0.27" stop-color="#a0e64d" stop-opacity="0.285"/><stop offset="0.73" stop-color="#63b23e" stop-opacity="0.265"/></linearGradient><linearGradient id="g7_5" gradientUnits="userSpaceOnUse" x1="666.5" y1="0" x2="2337.5" y2="0"><stop offset="0.27" stop-color="#a0e64d" stop-opacity="0.285"/><stop offset="0.73" stop-color="#2bbdb5" stop-opacity="0.265"/></linearGradient><linearGradient id="g7_6" gradientUnits="userSpaceOnUse" x1="666.5" y1="0" x2="2337.5" y2="0"><stop offset="0.27" stop-color="#a0e64d" stop-opacity="0.285"/><stop offset="0.73" stop-color="#e4c424" stop-opacity="0.265"/></linearGradient><linearGradient id="g7_7" gradientUnits="userSpaceOnUse" x1="666.5" y1="0" x2="2337.5" y2="0"><stop offset="0.27" stop-color="#a0e64d" stop-opacity="0.285"/><stop offset="0.73" stop-color="#94503e" stop-opacity="0.265"/></linearGradient><linearGradient id="g7_8" gradientUnits="userSpaceOnUse" x1="666.5" y1="0" x2="2337.5" y2="0"><stop offset="0.27" stop-color="#a0e64d" stop-opacity="0.285"/><stop offset="0.73" stop-color="#dd8e3c" stop-opacity="0.265"/></linearGradient><linearGradient id="g7_11" gradientUnits="userSpaceOnUse" x1="666.5" y1="0" x2="2337.5" y2="0"><stop offset="0.27" stop-color="#a0e64d" stop-opacity="0.285"/><stop offset="0.73" stop-color="#c2a533" stop-opacity="0.265"/></linearGradient><linearGradient id="g7_12" gradientUnits="userSpaceOnUse" x1="666.5" y1="0" x2="2337.5" y2="0"><stop offset="0.27" stop-color="#a0e64d" stop-opacity="0.285"/><stop offset="0.73" stop-color="#2b999f" stop-opacity="0.265"/></linearGradient><linearGradient id="g7_13" gradientUnits="userSpaceOnUse" x1="666.5" y1="0" x2="2337.5" y2="0"><stop offset="0.27" stop-color="#a0e64d" stop-opacity="0.285"/><stop offset="0.73" stop-color="#6ec44c" stop-opacity="0.265"/></linearGradient><linearGradient id="g7_14" gradientUnits="userSpaceOnUse" x1="666.5" y1="0" x2="2337.5" y2="0"><stop offset="0.27" stop-color="#a0e64d" stop-opacity="0.285"/><stop offset="0.73" stop-color="#2d7c7a" stop-opacity="0.265"/></linearGradient></defs><g fill="none" stroke-opacity="1"><path d="M666.5,1472.8C1502.0,1472.8 1502.0,1514.7 2337.5,1514.7" stroke="url(#g1_7)" stroke-width="79.0"/><path d="M666.5,1543.0C1502.0,1543.0 1502.0,1666.0 2337.5,1666.0" stroke="url(#g1_8)" stroke-width="61.3"/><path d="M666.5,1597.1C1502.0,1597.1 1502.0,1822.6 2337.5,1822.6" stroke="url(#g1_10)" stroke-width="43.0"/><path d="M666.5,1353.2C1502.0,1353.2 1502.0,1164.2 2337.5,1164.2" stroke="url(#g1_2)" stroke-width="37.5"/><path d="M666.5,1418.3C1502.0,1418.3 1502.0,1413.0 2337.5,1413.0" stroke="url(#g1_6)" stroke-width="30.0"/><path d="M666.5,1388.6C1502.0,1388.6 1502.0,1323.7 2337.5,1323.7" stroke="url(#g1_5)" stroke-width="29.4"/><path d="M666.5,1685.1C1502.0,1685.1 1502.0,2132.7 2337.5,2132.7" stroke="url(#g1_14)" stroke-width="23.1"/><path d="M666.5,1662.6C1502.0,1662.6 1502.0,2061.6 2337.5,2061.6" stroke="url(#g1_13)" stroke-width="22.0"/><path d="M666.5,1643.1C1502.0,1643.1 1502.0,2003.1 2337.5,2003.1" stroke="url(#g1_12)" stroke-width="17.0"/><path d="M666.5,1626.6C1502.0,1626.6 1502.0,1924.1 2337.5,1924.1" stroke="url(#g1_11)" stroke-width="16.0"/><path d="M666.5,1762.9C1502.0,1762.9 1502.0,1561.2 2337.5,1561.2" stroke="url(#g2_7)" stroke-width="14.0"/><path d="M666.5,1867.1C1502.0,1867.1 1502.0,1575.2 2337.5,1575.2" stroke="url(#g3_7)" stroke-width="14.0"/><path d="M666.5,1327.9C1502.0,1327.9 1502.0,1097.2 2337.5,1097.2" stroke="url(#g1_1)" stroke-width="13.0"/><path d="M666.5,1963.5C1502.0,1963.5 1502.0,1588.6 2337.5,1588.6" stroke="url(#g4_7)" stroke-width="12.8"/><path d="M666.5,1746.9C1502.0,1746.9 1502.0,1344.4 2337.5,1344.4" stroke="url(#g2_5)" stroke-width="12.0"/><path d="M666.5,1315.5C1502.0,1315.5 1502.0,1044.8 2337.5,1044.8" stroke="url(#g1_0)" stroke-width="11.7"/><path d="M666.5,1733.6C1502.0,1733.6 1502.0,1188.4 2337.5,1188.4" stroke="url(#g2_2)" stroke-width="11.0"/><path d="M666.5,1774.9C1502.0,1774.9 1502.0,1701.6 2337.5,1701.6" stroke="url(#g2_8)" stroke-width="10.0"/><path d="M666.5,1846.7C1502.0,1846.7 1502.0,1196.9 2337.5,1196.9" stroke="url(#g3_2)" stroke-width="6.0"/><path d="M666.5,1950.8C1502.0,1950.8 1502.0,1358.1 2337.5,1358.1" stroke="url(#g4_5)" stroke-width="5.5"/><path d="M666.5,1257.5C1502.0,1257.5 1502.0,1036.5 2337.5,1036.5" stroke="url(#g0_0)" stroke-width="5.0"/><path d="M666.5,1944.4C1502.0,1944.4 1502.0,1202.4 2337.5,1202.4" stroke="url(#g4_2)" stroke-width="5.0"/><path d="M666.5,1854.1C1502.0,1854.1 1502.0,1352.9 2337.5,1352.9" stroke="url(#g3_5)" stroke-width="5.0"/><path d="M666.5,1270.5C1502.0,1270.5 1502.0,1473.2 2337.5,1473.2" stroke="url(#g0_7)" stroke-width="4.0"/><path d="M666.5,2142.9C1502.0,2142.9 1502.0,1112.0 2337.5,1112.0" stroke="url(#g7_1)" stroke-width="3.8"/><path d="M666.5,2091.0C1502.0,2091.0 1502.0,1108.2 2337.5,1108.2" stroke="url(#g6_1)" stroke-width="3.7"/><path d="M666.5,1858.3C1502.0,1858.3 1502.0,1432.8 2337.5,1432.8" stroke="url(#g3_6)" stroke-width="3.5"/><path d="M666.5,1955.3C1502.0,1955.3 1502.0,1436.2 2337.5,1436.2" stroke="url(#g4_6)" stroke-width="3.5"/><path d="M666.5,2152.3C1502.0,2152.3 1502.0,1602.2 2337.5,1602.2" stroke="url(#g7_7)" stroke-width="3.5"/><path d="M666.5,1261.5C1502.0,1261.5 1502.0,1089.2 2337.5,1089.2" stroke="url(#g0_1)" stroke-width="3.0"/><path d="M666.5,1754.4C1502.0,1754.4 1502.0,1429.5 2337.5,1429.5" stroke="url(#g2_6)" stroke-width="3.0"/><path d="M666.5,2044.6C1502.0,2044.6 1502.0,1596.5 2337.5,1596.5" stroke="url(#g5_7)" stroke-width="3.0"/><path d="M666.5,2098.9C1502.0,2098.9 1502.0,1599.2 2337.5,1599.2" stroke="url(#g6_7)" stroke-width="2.5"/><path d="M666.5,2148.1C1502.0,2148.1 1502.0,1366.1 2337.5,1366.1" stroke="url(#g7_5)" stroke-width="2.4"/><path d="M666.5,2145.9C1502.0,2145.9 1502.0,1209.2 2337.5,1209.2" stroke="url(#g7_2)" stroke-width="2.1"/><path d="M666.5,2040.8C1502.0,2040.8 1502.0,1361.9 2337.5,1361.9" stroke="url(#g5_5)" stroke-width="2.0"/><path d="M666.5,2095.5C1502.0,2095.5 1502.0,1363.9 2337.5,1363.9" stroke="url(#g6_5)" stroke-width="2.0"/><path d="M666.5,1574.6C1502.0,1574.6 1502.0,1765.3 2337.5,1765.3" stroke="url(#g1_9)" stroke-width="2.0"/><path d="M666.5,2039.0C1502.0,2039.0 1502.0,1205.7 2337.5,1205.7" stroke="url(#g5_2)" stroke-width="1.6"/><path d="M666.5,2093.7C1502.0,2093.7 1502.0,1207.3 2337.5,1207.3" stroke="url(#g6_2)" stroke-width="1.6"/><path d="M666.5,1941.1C1502.0,1941.1 1502.0,1104.5 2337.5,1104.5" stroke="url(#g4_1)" stroke-width="1.5"/><path d="M666.5,1263.8C1502.0,1263.8 1502.0,1144.7 2337.5,1144.7" stroke="url(#g0_2)" stroke-width="1.5"/><path d="M666.5,1273.2C1502.0,1273.2 1502.0,1634.5 2337.5,1634.5" stroke="url(#g0_8)" stroke-width="1.5"/><path d="M666.5,1274.8C1502.0,1274.8 1502.0,1800.3 2337.5,1800.3" stroke="url(#g0_10)" stroke-width="1.5"/><path d="M666.5,1276.2C1502.0,1276.2 1502.0,1915.3 2337.5,1915.3" stroke="url(#g0_11)" stroke-width="1.5"/><path d="M666.5,1277.8C1502.0,1277.8 1502.0,2049.8 2337.5,2049.8" stroke="url(#g0_13)" stroke-width="1.5"/><path d="M666.5,1279.2C1502.0,1279.2 1502.0,2120.3 2337.5,2120.3" stroke="url(#g0_14)" stroke-width="1.5"/><path d="M666.5,1727.4C1502.0,1727.4 1502.0,1051.4 2337.5,1051.4" stroke="url(#g2_0)" stroke-width="1.4"/><path d="M666.5,1843.0C1502.0,1843.0 1502.0,1052.8 2337.5,1052.8" stroke="url(#g3_0)" stroke-width="1.4"/><path d="M666.5,1939.8C1502.0,1939.8 1502.0,1054.2 2337.5,1054.2" stroke="url(#g4_0)" stroke-width="1.3"/><path d="M666.5,2036.3C1502.0,2036.3 1502.0,1055.5 2337.5,1055.5" stroke="url(#g5_0)" stroke-width="1.3"/><path d="M666.5,2042.4C1502.0,2042.4 1502.0,1438.7 2337.5,1438.7" stroke="url(#g5_6)" stroke-width="1.3"/><path d="M666.5,2150.0C1502.0,2150.0 1502.0,1441.2 2337.5,1441.2" stroke="url(#g7_6)" stroke-width="1.3"/><path d="M666.5,2037.6C1502.0,2037.6 1502.0,1105.8 2337.5,1105.8" stroke="url(#g5_1)" stroke-width="1.2"/><path d="M666.5,1850.3C1502.0,1850.3 1502.0,1243.2 2337.5,1243.2" stroke="url(#g3_3)" stroke-width="1.2"/><path d="M666.5,1947.5C1502.0,1947.5 1502.0,1244.4 2337.5,1244.4" stroke="url(#g4_3)" stroke-width="1.2"/><path d="M666.5,1266.9C1502.0,1266.9 1502.0,1308.4 2337.5,1308.4" stroke="url(#g0_5)" stroke-width="1.2"/><path d="M666.5,2097.1C1502.0,2097.1 1502.0,1439.9 2337.5,1439.9" stroke="url(#g6_6)" stroke-width="1.2"/><path d="M666.5,2088.7C1502.0,2088.7 1502.0,1056.6 2337.5,1056.6" stroke="url(#g6_0)" stroke-width="1.1"/><path d="M666.5,2140.5C1502.0,2140.5 1502.0,1057.8 2337.5,1057.8" stroke="url(#g7_0)" stroke-width="1.1"/><path d="M666.5,1265.0C1502.0,1265.0 1502.0,1240.1 2337.5,1240.1" stroke="url(#g0_3)" stroke-width="1.0"/><path d="M666.5,1372.4C1502.0,1372.4 1502.0,1241.1 2337.5,1241.1" stroke="url(#g1_3)" stroke-width="1.0"/><path d="M666.5,1739.6C1502.0,1739.6 1502.0,1242.1 2337.5,1242.1" stroke="url(#g2_3)" stroke-width="1.0"/><path d="M666.5,1373.4C1502.0,1373.4 1502.0,1275.9 2337.5,1275.9" stroke="url(#g1_4)" stroke-width="1.0"/><path d="M666.5,1268.0C1502.0,1268.0 1502.0,1397.5 2337.5,1397.5" stroke="url(#g0_6)" stroke-width="1.0"/><path d="M666.5,1265.9C1502.0,1265.9 1502.0,1275.0 2337.5,1275.0" stroke="url(#g0_4)" stroke-width="1.0"/><path d="M666.5,1740.5C1502.0,1740.5 1502.0,1276.8 2337.5,1276.8" stroke="url(#g2_4)" stroke-width="1.0"/><path d="M666.5,1851.2C1502.0,1851.2 1502.0,1277.5 2337.5,1277.5" stroke="url(#g3_4)" stroke-width="1.0"/></g><rect x="633.0" y="1255.0" width="33.5" height="25.0" fill="#293d51"/><rect x="633.0" y="1309.7" width="33.5" height="387.0" fill="#1f6293"/><rect x="2337.5" y="1034.0" width="34.0" height="24.3" fill="#e8182c"/><rect x="2337.5" y="1087.7" width="34.0" height="26.2" fill="#d3a12a"/><rect x="2337.5" y="1143.9" width="34.0" height="66.3" fill="#4c9f38"/><rect x="2337.5" y="1239.6" width="34.0" height="5.4" fill="#c52030"/><rect x="2337.5" y="1274.6" width="34.0" height="3.3" fill="#ee4034"/><rect x="2337.5" y="1307.8" width="34.0" height="59.5" fill="#00aedb"/><rect x="2337.5" y="1397.0" width="34.0" height="44.8" fill="#fdb715"/><rect x="2337.5" y="1471.2" width="34.0" height="132.8" fill="#8f1838"/><rect x="2337.5" y="1633.8" width="34.0" height="100.5" fill="#f36d36"/></svg><div class="t" style="left:503.7px;top:1254.1px;font-size:27px;line-height:27px;color:#111;letter-spacing:0.3px;font-weight:normal;font-style:normal;transform:scaleX(1.0232);transform-origin:0 0;">General</div><div class="t" style="left:474.0px;top:1489.8px;font-size:27px;line-height:27px;color:#111;letter-spacing:0.8px;font-weight:normal;font-style:normal;transform:scaleX(1.0367);transform-origin:0 0;">Electricity</div><div class="t" style="left:491.6px;top:1520.3px;font-size:27px;line-height:27px;color:#111;letter-spacing:0.8px;font-weight:normal;font-style:normal;">and heat</div><div class="t" style="left:2397.9px;top:1032.4px;font-size:28px;line-height:28px;color:#111;letter-spacing:0px;font-weight:normal;font-style:normal;transform:scaleX(0.7975);transform-origin:0 0;">SDG 1</div><div class="t" style="left:2397.8px;top:1087.1px;font-size:28px;line-height:28px;color:#111;letter-spacing:0px;font-weight:normal;font-style:normal;transform:scaleX(0.8712);transform-origin:0 0;">SDG 2</div><div class="t" style="left:2397.8px;top:1163.3px;font-size:28px;line-height:28px;color:#111;letter-spacing:0px;font-weight:normal;font-style:normal;transform:scaleX(0.8685);transform-origin:0 0;">SDG 3</div><div class="t" style="left:2397.8px;top:1228.6px;font-size:28px;line-height:28px;color:#111;letter-spacing:0px;font-weight:normal;font-style:normal;transform:scaleX(0.8841);transform-origin:0 0;">SDG 4</div><div class="t" style="left:2397.8px;top:1262.5px;font-size:28px;line-height:28px;color:#111;letter-spacing:0px;font-weight:normal;font-style:normal;transform:scaleX(0.8685);transform-origin:0 0;">SDG 5</div><div class="t" style="left:2397.8px;top:1323.8px;font-size:28px;line-height:28px;color:#111;letter-spacing:0px;font-weight:normal;font-style:normal;transform:scaleX(0.8783);transform-origin:0 0;">SDG 6</div><div class="t" style="left:2397.8px;top:1405.7px;font-size:28px;line-height:28px;color:#111;letter-spacing:0px;font-weight:normal;font-style:normal;transform:scaleX(0.8650);transform-origin:0 0;">SDG 7</div><div class="t" style="left:2397.8px;top:1523.9px;font-size:28px;line-height:28px;color:#111;letter-spacing:0px;font-weight:normal;font-style:normal;transform:scaleX(0.8783);transform-origin:0 0;">SDG 8</div><div class="t" style="left:2397.8px;top:1670.3px;font-size:28px;line-height:28px;color:#111;letter-spacing:0px;font-weight:normal;font-style:normal;transform:scaleX(0.8773);transform-origin:0 0;">SDG 9</div><div class="box" style="left:1146px;top:826px;width:710px;height:388px;background:#2b3e50;border-radius:7px;box-shadow:0 0 70px 36px rgba(255,255,255,0.92), 0 1px 3px rgba(0,0,0,0.4)"></div><div class="t" style="left:1210.2px;top:855.3px;font-size:45px;line-height:45px;color:#ffffff;letter-spacing:1.2px;font-weight:normal;font-style:normal;transform:scaleX(1.0086);transform-origin:0 0;">Welcome to the SCAN-tool!</div><svg class="box" style="left:1806px;top:855px" width="22" height="20" viewBox="0 0 22 20"><path d="M2.5,1.5L19.5,18.5M19.5,1.5L2.5,18.5" stroke="#d3d7db" stroke-width="4.2" fill="none"/></svg><div class="t" style="left:1185.7px;top:929.4px;font-size:31px;line-height:31px;color:#e9edf0;letter-spacing:0.5px;font-weight:normal;font-style:normal;transform:scaleX(1.0058);transform-origin:0 0;">This tool will provide you a first ‘scan’ of the</div><div class="t" style="left:1184.5px;top:971.5px;font-size:31px;line-height:31px;color:#e9edf0;letter-spacing:0.5px;font-weight:normal;font-style:normal;transform:scaleX(1.0243);transform-origin:0 0;">potential links (synergies and trade-offs)</div><div class="t" style="left:1184.5px;top:1012.8px;font-size:31px;line-height:31px;color:#e9edf0;letter-spacing:0.5px;font-weight:normal;font-style:normal;transform:scaleX(0.9919);transform-origin:0 0;">between SDGs and the mitigation actions in</div><div class="t" style="left:1185.2px;top:1054.0px;font-size:31px;line-height:31px;color:#e9edf0;letter-spacing:0.5px;font-weight:normal;font-style:normal;transform:scaleX(1.0382);transform-origin:0 0;">different sectors.</div><div class="t" style="left:1212.3px;top:1132.7px;font-size:28px;line-height:28px;color:#ffffff;letter-spacing:0px;font-weight:normal;font-style:normal;transform:scaleX(1.0128);transform-origin:0 0;">Skip tour</div><div class="box" style="left:1619px;top:1120px;width:198px;height:55px;background:#0095d9;border-radius:4px"></div><div class="t" style="left:1648.6px;top:1132.7px;font-size:28px;line-height:28px;color:#ffffff;letter-spacing:0.4px;font-weight:bold;font-style:normal;transform:scaleX(1.0172);transform-origin:0 0;">Start Tour</div></body></html>
